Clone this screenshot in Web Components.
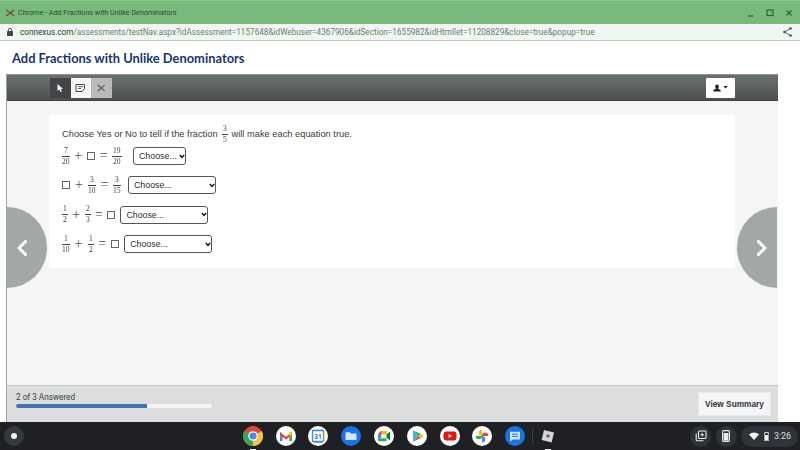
<!DOCTYPE html>
<html>
<head>
<meta charset="utf-8">
<title>Add Fractions with Unlike Denominators</title>
<style>
  html, body { margin: 0; padding: 0; background: #fff; }
  body { width: 800px; height: 450px; overflow: hidden; display: flex; flex-direction: column; font-family: "Liberation Sans", Arial, sans-serif; }
</style>
</head>
<body>
<window-titlebar>Chrome - Add Fractions with Unlike Denominators</window-titlebar>
<address-bar host="connexus.com" path="/assessments/testNav.aspx?idAssessment=1157648&idWebuser=4367906&idSection=1655982&idHtmllet=11208829&close=true&popup=true"></address-bar>
<page-heading>Add Fractions with Unlike Denominators</page-heading>
<test-frame>
  <question-card>
    <span slot="prompt">Choose Yes or No to tell if the fraction <math-frac n="3" d="5" style="margin:0 1.5px"></math-frac> will make each equation true.</span>
    <equation-row width="53" gap="11" mgap="4.75"><math-frac n="7" d="20"></math-frac><math-op>+</math-op><math-box></math-box><math-op>=</math-op><math-frac n="19" d="20"></math-frac></equation-row>
    <equation-row width="88" gap="7" mgap="5"><math-box></math-box><math-op>+</math-op><math-frac n="3" d="10"></math-frac><math-op>=</math-op><math-frac n="3" d="15"></math-frac></equation-row>
    <equation-row width="88" gap="5" mgap="4.5"><math-frac n="1" d="2"></math-frac><math-op>+</math-op><math-frac n="2" d="3"></math-frac><math-op>=</math-op><math-box></math-box></equation-row>
    <equation-row width="88" gap="5" mgap="5"><math-frac n="1" d="10"></math-frac><math-op>+</math-op><math-frac n="1" d="2"></math-frac><math-op>=</math-op><math-box></math-box></equation-row>
  </question-card>
</test-frame>
<app-shelf></app-shelf>

<script>
const define = (name, html, init) => {
  customElements.define(name, class extends HTMLElement {
    constructor() {
      super();
      this.attachShadow({ mode: "open" }).innerHTML = html;
    }
    connectedCallback() {
      if (init) init(this, this.shadowRoot);
    }
  });
};

define('window-titlebar', `
<style>
  :host { display: flex; align-items: center; height: 24px; background: #78b97c; border-top: 1px solid #8cc690; box-sizing: border-box; padding: 0 0 0 5px; color: #2f4a33; font: 7.2px Roboto, sans-serif; }
  svg { display: block; }
  .x { width: 10px; height: 10px; margin-right: 3px; }
  .text { flex: 1; }
  .ctl { display: flex; gap: 9px; margin-right: 6px; align-items: center; }
</style>
<svg class="x" viewBox="0 0 10 10"><path d="M1 2 Q5 4 9 8 M1 8 Q5 6 9 2" stroke="#7a4a2a" stroke-width="1.3" fill="none"/></svg>
<span class="text"><slot></slot></span>
<div class="ctl">
  <svg width="10" height="10" viewBox="0 0 10 10"><path d="M2 8h5" stroke="#3e5c42" stroke-width="1.2"/></svg>
  <svg width="10" height="10" viewBox="0 0 10 10"><rect x="2" y="2" width="6" height="5.5" fill="none" stroke="#3e5c42" stroke-width="1.2"/></svg>
  <svg width="10" height="10" viewBox="0 0 10 10"><path d="M2.5 2.5l5 5M7.5 2.5l-5 5" stroke="#3e5c42" stroke-width="1.2"/></svg>
</div>`);

define('address-bar', `
<style>
  :host { display: flex; align-items: center; height: 17px; background: #f0f7f0; border-bottom: 1px solid #c4c8c4; box-sizing: border-box; padding: 0 8px 0 7px; font: 8.2px Roboto, sans-serif; color: #6f7a72; white-space: nowrap; }
  .lock { margin-right: 7px; }
  b { font-weight: 400; color: #2e3a32; }
  .url { flex: 1; }
</style>
<svg class="lock" width="6" height="8" viewBox="0 0 6 8"><path d="M1.3 3V2a1.7 1.7 0 0 1 3.4 0v1" fill="none" stroke="#444" stroke-width=".9"/><rect y="3" width="6" height="5" rx=".6" fill="#444"/></svg>
<span class="url"><b id="h"></b><span id="p"></span></span>
<svg width="9" height="10" viewBox="0 0 9 10"><path d="M7.5 1.5L1.5 5l6 3.5" fill="none" stroke="#555" stroke-width=".9"/><circle cx="7.5" cy="1.5" r="1.3" fill="#555"/><circle cx="1.5" cy="5" r="1.3" fill="#555"/><circle cx="7.5" cy="8.5" r="1.3" fill="#555"/></svg>`,
(el, root) => {
  root.getElementById('h').textContent = el.getAttribute('host');
  root.getElementById('p').textContent = el.getAttribute('path');
});

define('page-heading', `
<style>
  :host { display: flex; align-items: center; height: 33px; padding: 0 0 0 12px; box-sizing: border-box; background: #fff; color: #17366f; font: 700 12.9px Lato, sans-serif; }
</style>
<slot></slot>`);

define('test-toolbar', `
<style>
  :host { display: flex; align-items: center; justify-content: space-between; height: 27px; box-sizing: border-box; padding: 0 43px 0 43px; background: linear-gradient(#6b7070, #4b4f4f); border-top: 1px solid #8d9090; border-bottom: 1px solid #3f4242; }
  .tools { display: flex; }
  .b { width: 20.6px; height: 20px; display: flex; align-items: center; justify-content: center; }
  .dark { background: #424547; }
  .white { background: #f6f6f6; }
  .grey { background: #b9babb; }
  .user { width: 29px; height: 20px; background: #fff; display: flex; align-items: center; justify-content: center; gap: 1.5px; border-radius: 1px; }
</style>
<div class="tools">
  <div class="b dark"><svg width="8" height="10" viewBox="0 0 8 10"><path d="M1.5 1v7l2-1.6L4.6 9l1.3-.6L4.8 6H7z" fill="#fff"/></svg></div>
  <div class="b white"><svg width="11" height="10" viewBox="0 0 11 10"><path d="M1 1.5h8.5v4L7 8.5H1z" fill="none" stroke="#444" stroke-width="1"/><path d="M3 3.6h5M3 5.5h3" stroke="#444" stroke-width=".8"/></svg></div>
  <div class="b grey"><svg width="10" height="10" viewBox="0 0 10 10"><path d="M1.5 2Q5 4 8.5 8M1.5 8Q5 6 8.5 2" fill="none" stroke="#333" stroke-width="1"/></svg></div>
</div>
<div class="user">
  <svg width="8" height="8" viewBox="0 0 8 8"><path d="M4 .4c1.2 0 1.8.9 1.8 2 0 1-.5 1.7-1 2.2L7.6 6v1.6H.4V6l2.8-1.400c-.5-.5-1-1.200-1-2.200 0-1.100.6-2 1.800-2z" fill="#222"/></svg>
  <svg width="5" height="3" viewBox="0 0 5 3"><path d="M.3 0h4.400L2.500 2.600z" fill="#222"/></svg>
</div>`);

define('nav-arrow', `
<style>
  :host { position: absolute; top: 106px; width: 40px; height: 81px; background: #a4a7a8; display: flex; align-items: center; box-sizing: border-box; }
  :host([dir="left"]) { left: 0; border-radius: 0 40.5px 40.5px 0; padding-left: 9px; }
  :host([dir="right"]) { right: 1px; border-radius: 40.5px 0 0 40.5px; padding-left: 19px; }
  svg { display: block; }
</style>
<svg width="12" height="18" viewBox="0 0 12 18"><path id="p" fill="none" stroke="#fff" stroke-width="3" stroke-linecap="round" stroke-linejoin="round"/></svg>`,
(el, root) => {
  root.getElementById('p').setAttribute('d', el.getAttribute('dir') == 'left' ? 'M9.5 2.500L3 9l6.500 6.500' : 'M2.500 2.500L9 9l-6.500 6.500');
});

define('test-frame', `
<style>
  :host { display: flex; flex-direction: column; width: 772px; height: 348px; margin-left: 6px; border-left: 1px solid #a0a2a2; box-sizing: border-box; background: #f5f5f5; }
  .stage { position: relative; flex: 1; padding: 14px 43px 0 42px; }
</style>
<test-toolbar></test-toolbar>
<div class="stage">
  <nav-arrow dir="left"></nav-arrow>
  <slot></slot>
  <nav-arrow dir="right"></nav-arrow>
</div>
<test-footer></test-footer>`);

define('question-card', `
<style>
  :host { display: block; background: #fff; height: 153px; box-sizing: border-box; padding: 10px 12px 0 13px; color: #3a3a3a; font: 9.3px "Liberation Sans", sans-serif; }
  .prompt { display: block; height: 22px; }
  .rows { display: flex; flex-direction: column; gap: 11.4px; }
</style>
<div class="prompt"><slot name="prompt"></slot></div>
<div class="rows"><slot></slot></div>`);

define('equation-row', `
<style>
  :host { display: flex; align-items: center; height: 18px; }
  .math { display: flex; align-items: center; }
  .wrap { position: relative; display: block; }
  select { display: block; appearance: none; -webkit-appearance: none; height: 18px; width: 100%; box-sizing: border-box; background: #fff; color: #2c2c2c; border: 1px solid #555; border-radius: 3px; font: 8.8px "Liberation Sans", sans-serif; padding: 0 0 0 5px; margin: 0; }
  svg { position: absolute; right: 1.5px; top: 6.5px; pointer-events: none; }
</style>
<div class="math" id="m"><slot></slot></div>
<div class="wrap" id="w">
  <select><option>Choose...</option><option>Yes</option><option>No</option></select>
  <svg width="6" height="5" viewBox="0 0 6 5"><path d="M.8 1l2.200 2.400L5.200 1" fill="none" stroke="#111" stroke-width="1.400"/></svg>
</div>`,
(el, root) => {
  const w = root.getElementById('w');
  w.style.width = el.getAttribute('width') + 'px';
  w.style.marginLeft = el.getAttribute('gap') + 'px';
  root.getElementById('m').style.gap = el.getAttribute('mgap') + 'px';
});

define('math-frac', `
<style>
  :host { display: inline-flex; flex-direction: column; align-items: center; vertical-align: middle; color: #444; font: 7.6px/8px "Liberation Serif", serif; will-change: transform; }
  .n { border-bottom: .7px solid #444; padding: 0 1px 1px; align-self: stretch; text-align: center; }
  .d { padding-top: 1px; }
</style>
<span class="n" id="n"></span><span class="d" id="d"></span>`,
(el, root) => {
  root.getElementById('n').textContent = el.getAttribute('n');
  root.getElementById('d').textContent = el.getAttribute('d');
});

define('math-op', `
<style>
  :host { display: inline-block; color: #555; font: 14px/14px "Liberation Serif", serif; }
</style>
<slot></slot>`);

define('math-box', `
<style>
  :host { display: inline-block; width: 8px; height: 8px; border: .8px solid #666; box-sizing: border-box; }
</style>`);

define('test-footer', `
<style>
  :host { display: flex; justify-content: space-between; height: 37px; box-sizing: border-box; padding: 6px 7px 0 9px; background: #dcdddd; border-top: 1px solid #c6c8c8; }
  .label { font: 8.2px Roboto, sans-serif; color: #3a3d40; margin-bottom: 1px; line-height: 11px; }
  .track { width: 196px; height: 4px; background: #f3f4f5; border-radius: 2px; overflow: hidden; }
  .fill { width: 131px; height: 4px; background: #3e74b4; }
  .btn { width: 73px; height: 24px; display: flex; align-items: center; justify-content: center; background: #f4f5f6; border: 1px solid #e8e9ea; box-sizing: border-box; font: 700 8.3px "Liberation Sans", sans-serif; color: #333; }
</style>
<div><div class="label">2 of 3 Answered</div><div class="track"><div class="fill"></div></div></div>
<div class="btn">View Summary</div>`);

define('shelf-icon', `
<style>
  :host { display: flex; flex-direction: column; align-items: center; width: 32.8px; position: relative; height: 28px; justify-content: center; }
  :host([open])::after { content: ""; position: absolute; bottom: 0; width: 6px; height: 1.5px; background: #e8eaed; }
  ::slotted(svg) { display: block; }
</style>
<slot></slot>`);

define('app-shelf', `
<style>
  :host { display: flex; align-items: center; height: 28px; background: #1e2024; position: relative; color: #e8eaed; }
  svg { display: block; }
  .launcher { width: 20px; height: 20px; border-radius: 50%; background: #35383c; display: flex; align-items: center; justify-content: center; margin-left: 4px; }
  .launcher i { width: 6px; height: 6px; border-radius: 50%; background: #f1f3f4; display: block; }
  .apps { display: flex; margin-left: 212.5px; align-items: center; }
  .sep { width: 1px; height: 14px; background: #3c3f43; margin-right: -1px; }
  .status { margin-left: auto; display: flex; align-items: center; gap: 4.5px; padding-right: 2px; }
  .c { width: 21px; height: 21px; border-radius: 50%; background: #2f3236; display: flex; align-items: center; justify-content: center; }
  .pill { height: 21px; width: 57px; border-radius: 11px; background: #2f3236; display: flex; align-items: center; gap: 5px; padding-left: 8px; font: 8.8px Roboto, sans-serif; color: #dfe1e5; box-sizing: border-box; }
</style>
<div class="launcher"><i></i></div>
<div class="apps">
  <shelf-icon open><svg width="20" height="20" viewBox="0 0 20 20"><circle cx="10" cy="10" r="10" fill="#e0473a"/><path d="M1.3 5L10 10 10 20A10 10 0 0 1 1.3 5z" fill="#3aa757"/><path d="M10 10L18.7 5A10 10 0 0 1 10 20z" fill="#f6c440"/><circle cx="10" cy="10" r="4.8" fill="#fff"/><circle cx="10" cy="10" r="3.6" fill="#4a8af0"/></svg></shelf-icon>
  <shelf-icon><svg width="20" height="20" viewBox="0 0 20 20"><circle cx="10" cy="10" r="10" fill="#fff"/><path d="M4 6v9h2.6V9z" fill="#4285f4"/><path d="M16 6v9h-2.6V9z" fill="#34a853"/><path d="M4 6l6 4.8L16 6v3l-6 4.6L4 9z" fill="#ea4335"/><path d="M14.2 5.6L16 6v3l-2.6 2V7z" fill="#fbbc04"/></svg></shelf-icon>
  <shelf-icon><svg width="20" height="20" viewBox="0 0 20 20"><circle cx="10" cy="10" r="10" fill="#fff"/><rect x="4.500" y="4.500" width="11" height="11" rx="1" fill="#fff" stroke="#4285f4" stroke-width="1.4"/><path d="M15.5 6v8h1.2V6z" fill="#fbbc04"/><path d="M6 15.5h8v1.2H6z" fill="#34a853"/><path d="M4 5h12V3.800H4z" fill="#4285f4"/><text x="10" y="12.6" font-size="6.5" font-weight="700" text-anchor="middle" fill="#1a73e8" font-family="Roboto, sans-serif">31</text></svg></shelf-icon>
  <shelf-icon><svg width="20" height="20" viewBox="0 0 20 20"><circle cx="10" cy="10" r="10" fill="#1a73e8"/><path d="M4.5 6.2h4.2l1.2 1.3h5.6v6.6H4.5z" fill="#d4e6fc"/></svg></shelf-icon>
  <shelf-icon><svg width="20" height="20" viewBox="0 0 20 20"><circle cx="10" cy="10" r="10" fill="#fff"/><path d="M4 8l3-3h5.5v3.2H7.3V8z" fill="#ea4335"/><path d="M4 8h3.3v4.5H4z" fill="#4285f4"/><path d="M12.5 8.500L16 5.500v9l-3.500-3z" fill="#00832d"/><path d="M4 12.5h3.3v-.3h5.2v3H5.2A1.2 1.2 0 0 1 4 14z" fill="#34a853"/><path d="M12.5 5v3.2h-5V5z" fill="#fbbc04"/></svg></shelf-icon>
  <shelf-icon><svg width="20" height="20" viewBox="0 0 20 20"><circle cx="10" cy="10" r="10" fill="#fff"/><path d="M6 4.3v11.4L11.8 10z" fill="#3fb7e6"/><path d="M6 4.3L11.8 10l2-2z" fill="#34a853"/><path d="M6 15.7L11.8 10l2 2z" fill="#ea4335"/><path d="M13.8 8L16.6 10l-2.800 2-2-2z" fill="#fbbc04"/></svg></shelf-icon>
  <shelf-icon><svg width="20" height="20" viewBox="0 0 20 20"><circle cx="10" cy="10" r="10" fill="#fff"/><rect x="3.5" y="5.500" width="13" height="9" rx="2.4" fill="#e3160b"/><path d="M8.6 7.900v4.200l3.600-2.100z" fill="#fff"/></svg></shelf-icon>
  <shelf-icon><svg width="20" height="20" viewBox="0 0 20 20"><circle cx="10" cy="10" r="10" fill="#fff"/><path d="M10 10V3.6A3.200 3.200 0 0 0 10 10z" fill="#fbbc04"/><path d="M10 10H16.4A3.200 3.200 0 0 0 10 10z" fill="#ea4335"/><path d="M10 10V16.4A3.200 3.200 0 0 0 10 10z" fill="#4285f4"/><path d="M10 10H3.6A3.200 3.200 0 0 0 10 10z" fill="#34a853"/></svg></shelf-icon>
  <shelf-icon><svg width="20" height="20" viewBox="0 0 20 20"><circle cx="10" cy="10" r="10" fill="#1a73e8"/><path d="M5 5.800h10v7.600H8l-3 2z" fill="#d4e6fc"/><path d="M7 8.200h6M7 10.400h6" stroke="#1a73e8" stroke-width="1"/></svg></shelf-icon>
  <div class="sep"></div>
  <shelf-icon open><svg width="16" height="16" viewBox="0 0 16 16"><path d="M4 2l10 2.400-2.400 10L1.600 12z" fill="#d3d5d8"/><rect x="6.500" y="6.500" width="3" height="3" fill="#5c5f63" transform="rotate(13 8 8)"/></svg></shelf-icon>
</div>
<div class="status">
  <div class="c"><svg width="12" height="12" viewBox="0 0 12 12"><rect x="3.500" y="1" width="7.500" height="7.500" rx="1" fill="none" stroke="#e8eaed" stroke-width="1.1"/><path d="M1.2 3.500v6.300a1 1 0 0 0 1 1h6.300" fill="none" stroke="#e8eaed" stroke-width="1.1"/><path d="M7.2 3v3.500M5.500 4.800h3.500" stroke="#e8eaed" stroke-width="1"/></svg></div>
  <div class="c"><svg width="8" height="12" viewBox="0 0 8 12"><rect x=".6" y=".6" width="6.800" height="10.800" rx="1" fill="none" stroke="#e8eaed" stroke-width="1.1"/><rect x="1.600" y="3" width="4.800" height="7.500" fill="#e8eaed"/></svg></div>
  <div class="pill">
    <svg width="10" height="8" viewBox="0 0 10 8"><path d="M0 2.400a7.400 7.400 0 0 1 10 0L5 8z" fill="#f1f3f4"/></svg>
    <svg width="5" height="9" viewBox="0 0 5 9"><path d="M1.500 0h2v1H5v8H0V1h1.500z" fill="none" stroke="#f1f3f4" stroke-width="1"/><rect x=".8" y="3" width="3.400" height="5.300" fill="#f1f3f4"/></svg>
    <span>3:26</span>
  </div>
</div>`);
</script>
</body>
</html>
